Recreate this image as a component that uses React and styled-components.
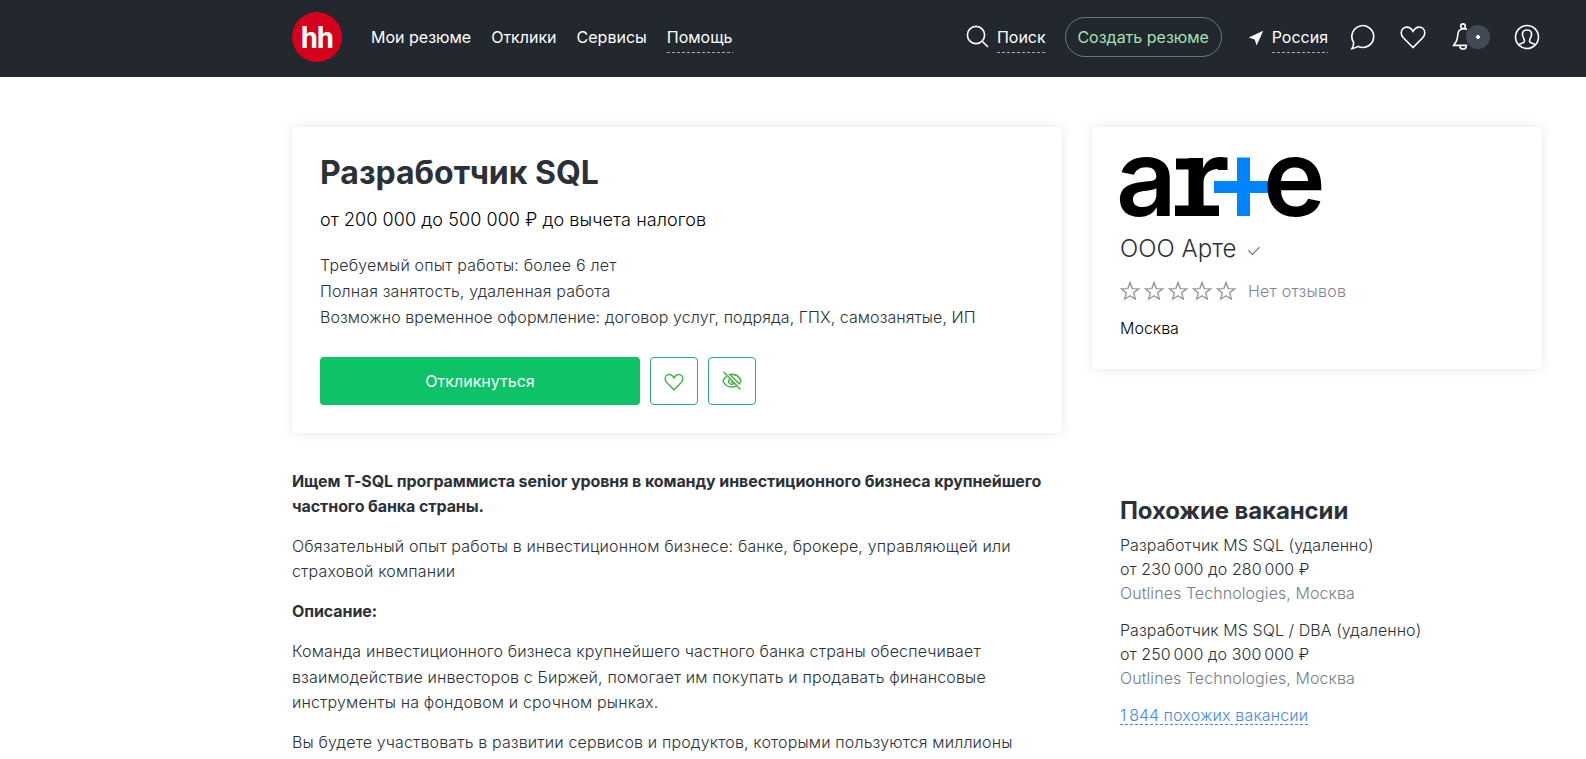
import React from "react";
import styled, { createGlobalStyle } from "styled-components";

const paragraphs = [
  {
    bold: true,
    lines: [
      "Ищем T-SQL программиста senior уровня в команду инвестиционного бизнеса крупнейшего",
      "частного банка страны.",
    ],
  },
  {
    lines: [
      "Обязательный опыт работы в инвестиционном бизнесе: банке, брокере, управляющей или",
      "страховой компании",
    ],
  },
  { bold: true, lines: ["Описание:"] },
  {
    lines: [
      "Команда инвестиционного бизнеса крупнейшего частного банка страны обеспечивает",
      "взаимодействие инвесторов с Биржей, помогает им покупать и продавать финансовые",
      "инструменты на фондовом и срочном рынках.",
    ],
  },
  {
    lines: [
      "Вы будете участвовать в развитии сервисов и продуктов, которыми пользуются миллионы",
    ],
  },
];

const similar = [
  {
    title: "Разработчик MS SQL (удаленно)",
    salary: "от 230\u202f000 до 280\u202f000 ₽",
    company: "Outlines Technologies, Москва",
  },
  {
    title: "Разработчик MS SQL / DBA (удаленно)",
    salary: "от 250\u202f000 до 300\u202f000 ₽",
    company: "Outlines Technologies, Москва",
  },
];

const SearchIcon = () => (
  <svg width="24" height="24" viewBox="0 0 24 24">
    <circle cx="10" cy="10" r="8.6" />
    <path d="M16.2 16.2 22 22" />
  </svg>
);

const ArrowIcon = () => (
  <svg width="16" height="16" viewBox="0 0 16 16">
    <path d="M15.3.8.7 7.4l6 2 1.900 6z" className="solid" />
  </svg>
);

const ChatIcon = () => (
  <svg width="26" height="26" viewBox="0 0 26 26">
    <path d="M1.9 24.6C3.3 22.6 3.7 20.8 3.6 18.4A10.9 10.9 0 1 1 8.2 22.4C6 23.6 4.2 24.4 1.9 24.6Z" />
  </svg>
);

const HeartIcon = () => (
  <svg width="26" height="24" viewBox="0 0 26 24">
    <path d="M13 22.5 3.3 12.7C1.6 10.9 1.2 9.5 1.2 7.7 1.2 4.5 3.6 2.1 6.8 2.1c2.8 0 4.7 1.5 6.2 4.3 1.5-2.8 3.4-4.3 6.2-4.3 3.2 0 5.6 2.4 5.6 5.6 0 1.8-.4 3.2-2.1 5z" />
  </svg>
);

const BellIcon = () => (
  <svg width="26" height="28" viewBox="0 0 26 28">
    <circle cx="13" cy="3.2" r="2.3" />
    <path d="M17 6.6C15.5 5.3 10.6 5 8.7 8.2 7.3 10.6 8 14.5 6.6 17.6 5.8 19.6 4.6 20.5 3.6 22.4H17.2M9.8 22.6c.2 4.6 6.4 4.6 6.6 0" />
  </svg>
);

const UserIcon = () => (
  <svg width="26" height="26" viewBox="0 0 26 26">
    <circle cx="13" cy="13" r="11.5" />
    <path d="M4.5 20.6C6 19.4 9.5 19.2 10.3 17.8 10.7 16.8 10.3 15.5 9.6 14.2 8.4 12 8.4 9 9 7.8 9.8 6.5 11.3 6 13 6s3.2.5 4 1.8c.6 1.2.6 4.2-.6 6.4-.7 1.3-1.1 2.6-.7 3.6.8 1.4 4.3 1.6 5.8 2.8" />
  </svg>
);

const HideIcon = () => (
  <svg width="20" height="20" viewBox="0 0 20 20">
    <path d="M4.6 5.3C2.9 6.5 1.6 8.2 1 10c1.5 3.7 5 6 9 6 1.7 0 3.2-.4 4.6-1.1M7.7 3.6C13 2.7 17.3 5.3 19 10c-.4 1-1 2-1.7 2.8L7.7 3.6ZM7.6 8.3a3 3 0 0 0 4.3 4.2M10 9.2v2.2h2M1.5.8l17 17.6" />
  </svg>
);

const CheckIcon = () => (
  <svg width="14" height="12" viewBox="0 0 14 12">
    <path d="M1.5 5.5 5.5 9.5 12.5 2.2" />
  </svg>
);

const StarIcon = () => (
  <svg width="20" height="20" viewBox="0 0 20 20">
    <path d="M10 1.6 12.2 7.6 18.6 7.9 13.7 11.8 15.3 18 10 14.7 4.7 18 6.3 11.8 1.4 7.9 7.8 7.6Z" />
  </svg>
);

const ArteLogo = () => (
  <LogoSvg width="202" height="62" viewBox="0 0 202 62">
    <path d="M94 25h23V1.5h13V25h23v12h-23v23h-13V37H94z" fill="#0084ff" />
    <text transform="translate(-4 60)" fontFamily="Inter" fontWeight="600" fontSize="106">a</text>
    <text transform="translate(60.5 60) scale(1.12 1)" fontFamily="Inter" fontWeight="600" fontSize="106">r</text>
    <rect x="56" y="2.5" width="14" height="11" />
    <rect x="98" y="1.5" width="9.5" height="12.5" />
    <rect x="55" y="49.5" width="44" height="10.5" />
    <text transform="translate(143 60)" fontFamily="Inter" fontWeight="600" fontSize="106">e</text>
  </LogoSvg>
);

const App = () => {
  return (
    <>
      <GlobalStyle />
      <Header>
        <Logo>hh</Logo>
        <Menu>
          <MenuLink>Мои резюме</MenuLink>
          <MenuLink>Отклики</MenuLink>
          <MenuLink>Сервисы</MenuLink>
          <MenuLink $dashed>Помощь</MenuLink>
        </Menu>
        <Actions>
          <SearchLink>
            <SearchIcon />
            <MenuLink $dashed>Поиск</MenuLink>
          </SearchLink>
          <CreateButton>Создать резюме</CreateButton>
          <RegionLink>
            <ArrowIcon />
            <MenuLink $dashed>Россия</MenuLink>
          </RegionLink>
          <IconLinks>
            <ChatIcon />
            <HeartIcon />
            <BellWrap>
              <BellIcon />
              <Badge />
            </BellWrap>
            <UserIcon />
          </IconLinks>
        </Actions>
      </Header>

      <Page>
        <Main>
          <VacancyCard>
            <Title>Разработчик SQL</Title>
            <Salary>от 200 000 до 500 000 ₽ до вычета налогов</Salary>
            <Terms>
              <li>Требуемый опыт работы: более 6 лет</li>
              <li>Полная занятость, удаленная работа</li>
              <li>
                Возможно временное оформление: договор услуг, подряда, ГПХ,
                самозанятые, ИП
              </li>
            </Terms>
            <Buttons>
              <RespondButton>Откликнуться</RespondButton>
              <SquareButton>
                <SmallHeart>
                  <HeartIcon />
                </SmallHeart>
              </SquareButton>
              <SquareButton>
                <HideIcon />
              </SquareButton>
            </Buttons>
          </VacancyCard>

          <Description>
            {paragraphs.map((p) => (
              <Paragraph key={p.lines[0]} $bold={p.bold}>
                {p.lines.map((line) => (
                  <span key={line}>{line}</span>
                ))}
              </Paragraph>
            ))}
          </Description>
        </Main>

        <Aside>
          <CompanyCard>
            <ArteLogo />
            <CompanyName>
              ООО Арте
              <CheckIcon />
            </CompanyName>
            <Rating>
              {[1, 2, 3, 4, 5].map((n) => (
                <StarIcon key={n} />
              ))}
              <span>Нет отзывов</span>
            </Rating>
            <City>Москва</City>
          </CompanyCard>

          <Similar>
            <SimilarTitle>Похожие вакансии</SimilarTitle>
            {similar.map((item) => (
              <SimilarItem key={item.title}>
                <span>{item.title}</span>
                <span>{item.salary}</span>
                <Muted>{item.company}</Muted>
              </SimilarItem>
            ))}
            <MoreLink>1{"\u202f"}844 похожих вакансии</MoreLink>
          </Similar>
        </Aside>
      </Page>
    </>
  );
};

export default App;

const GlobalStyle = createGlobalStyle`
  * {
    box-sizing: border-box;
  }

  body {
    margin: 0;
    height: 759px;
    overflow: hidden;
    background: #fff;
    color: #2b3137;
    font-family: "Inter", sans-serif;
    font-size: 16px;
    font-weight: 300;
  }

  svg {
    flex-shrink: 0;
  }
`;

const Header = styled.header`
  display: flex;
  align-items: flex-start;
  height: 77px;
  padding: 0 46px 0 292px;
  background: #23272e;
  color: #fff;
  font-weight: 400;

  svg {
    fill: none;
    stroke: #fff;
    stroke-width: 1.6;
  }

  svg .solid {
    fill: #fff;
    stroke: none;
  }
`;

const Logo = styled.div`
  width: 50px;
  height: 50px;
  margin-top: 12px;
  border-radius: 50%;
  background: #d6001c;
  font-family: "Roboto", sans-serif;
  font-size: 30px;
  font-weight: 700;
  line-height: 51px;
  letter-spacing: -0.8px;
  text-align: center;
`;

const Menu = styled.nav`
  display: flex;
  gap: 20px;
  margin: 25px 0 0 29px;
`;

const MenuLink = styled.a`
  height: 28px;
  line-height: 24px;
  white-space: nowrap;
  background: ${(props) =>
    props.$dashed
      ? "repeating-linear-gradient(90deg, #a7a9ac 0 3px, transparent 3px 5px) left bottom / 100% 1px no-repeat"
      : "none"};
`;

const Actions = styled.div`
  display: flex;
  margin-left: auto;
`;

const SearchLink = styled.div`
  display: flex;
  gap: 7px;
  margin-top: 25px;
`;

const CreateButton = styled.button`
  height: 40px;
  width: 157px;
  margin: 17px 0 0 19px;
  padding: 0;
  border: 1px solid #5f8170;
  border-radius: 20px;
  background: transparent;
  color: #a0e3b0;
  font: 400 16px "Inter", sans-serif;
`;

const RegionLink = styled.div`
  display: flex;
  gap: 8px;
  margin: 25px 0 0 26px;

  svg {
    margin-top: 5px;
  }
`;

const IconLinks = styled.div`
  display: flex;
  align-items: center;
  height: 28px;
  margin: 23px 0 0 22px;
  gap: 24px;
`;

const BellWrap = styled.div`
  position: relative;
  width: 40px;
  height: 28px;
`;

const Badge = styled.span`
  position: absolute;
  left: 16px;
  top: 2px;
  width: 24px;
  height: 24px;
  border-radius: 50%;
  background: radial-gradient(circle, #fff 0 1.6px, #424a53 2.2px);
`;

const Page = styled.div`
  display: flex;
  align-items: flex-start;
  gap: 30px;
  padding: 50px 0 0 292px;
`;

const Main = styled.main`
  width: 770px;
`;

const Card = styled.section`
  border-radius: 3px;
  background: #fff;
  box-shadow: 0 0 12px rgba(0, 0, 0, 0.1);
`;

const VacancyCard = styled(Card)`
  height: 306px;
  padding: 28px;
`;

const Title = styled.h1`
  margin: 0;
  font-size: 32px;
  font-weight: 700;
  line-height: 36px;
`;

const Salary = styled.p`
  margin: 16px 0 0;
  color: #000;
  font-size: 18px;
  line-height: 26px;
  letter-spacing: 0.07px;
`;

const Terms = styled.ul`
  margin: 19px 0 0;
  padding: 0;
  list-style: none;
  line-height: 26px;
  letter-spacing: 0.065px;

  li:first-child {
    letter-spacing: 0.2px;
  }

  li:nth-child(2) {
    letter-spacing: 0.14px;
  }
`;

const Buttons = styled.div`
  display: flex;
  gap: 10px;
  margin-top: 27px;
`;

const RespondButton = styled.button`
  width: 320px;
  height: 48px;
  border: none;
  border-radius: 4px;
  background: #0dc267;
  color: #fff;
  font: 400 16px "Inter", sans-serif;
`;

const SquareButton = styled.button`
  display: flex;
  align-items: center;
  justify-content: center;
  width: 48px;
  height: 48px;
  padding: 0;
  border: 1px solid #25b06d;
  border-radius: 4px;
  background: #fff;

  svg {
    fill: none;
    stroke: #4bb34b;
    stroke-width: 1.5;
  }
`;

const SmallHeart = styled.span`
  display: flex;
  padding-top: 1px;

  svg {
    width: 20px;
    height: 18px;
    stroke-width: 1.9;
  }
`;

const Description = styled.div`
  display: flex;
  flex-direction: column;
  gap: 15px;
  padding-top: 36px;
`;

const Paragraph = styled.p`
  display: flex;
  flex-direction: column;
  margin: 0;
  font-weight: ${(props) => (props.$bold ? 700 : 300)};
  letter-spacing: ${(props) => (props.$bold ? "-0.085px" : "0.15px")};
  line-height: 25.1px;
  white-space: nowrap;
`;

const Aside = styled.aside`
  width: 450px;
`;

const CompanyCard = styled(Card)`
  height: 242px;
  padding: 29px 28px;

  svg {
    display: block;
  }
`;

const LogoSvg = styled.svg`
  overflow: visible;
`;

const CompanyName = styled.div`
  display: flex;
  align-items: center;
  gap: 10px;
  margin-top: 15px;
  font-size: 24px;
  line-height: 32px;
  letter-spacing: 0.05px;

  svg {
    margin-top: 3px;
    fill: none;
    stroke: #6f7980;
    stroke-width: 1.2;
  }
`;

const Rating = styled.div`
  display: flex;
  align-items: center;
  gap: 4px;
  margin-top: 14px;
  color: #7f8592;
  line-height: 24px;
  letter-spacing: 0.25px;

  svg {
    margin-top: -1px;
    fill: none;
    stroke: #999;
    stroke-width: 1.4;
  }

  span {
    margin-left: 8px;
  }
`;

const City = styled.div`
  margin-top: 13px;
  color: #000;
  line-height: 24px;
`;

const Similar = styled.section`
  padding: 127px 0 0 28px;
`;

const SimilarTitle = styled.h2`
  margin: 0 0 7px;
  font-size: 24px;
  font-weight: 700;
  line-height: 30px;
  letter-spacing: -0.12px;
`;

const SimilarItem = styled.div`
  display: flex;
  flex-direction: column;
  margin-bottom: 13px;
  line-height: 24px;
  letter-spacing: 0.07px;
`;

const Muted = styled.span`
  color: #737e88;
`;

const MoreLink = styled.a`
  display: inline-block;
  margin-top: 3px;
  color: #4588e8;
  line-height: 18px;
  letter-spacing: 0.15px;
  border-bottom: 1px dashed #4588e8;
`;
